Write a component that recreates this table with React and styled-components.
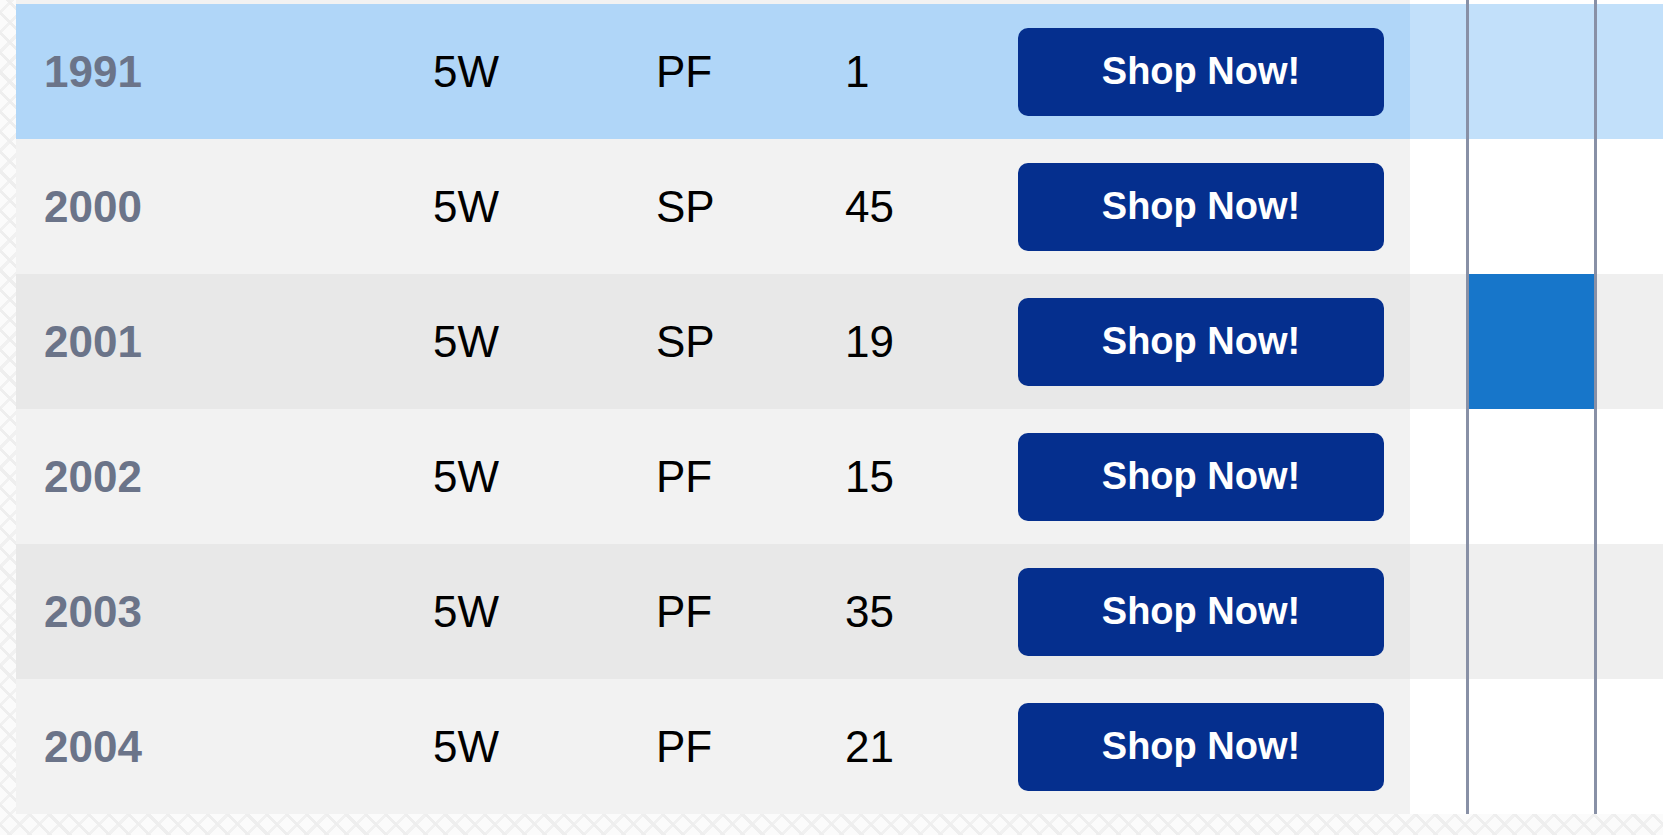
import styled, { createGlobalStyle } from "styled-components"

const GlobalStyle=createGlobalStyle`
  html,body{
    margin:0;
    padding:0;
  }
  body{
    width:1663px;
    height:835px;
    overflow:hidden;
    font-family:"Liberation Sans",Arial,sans-serif;
    background-color:#fbfbfb;
    background-image:
      repeating-linear-gradient(45deg,transparent 0 6px,#eeeeee 6px 9px,transparent 9px 14px),
      repeating-linear-gradient(-45deg,transparent 0 6px,#f1f1f1 6px 9px,transparent 9px 14px);
  }
`
const Page=styled.main`
  display:flex;
  flex-direction:column;
  padding:0 0 21px 16px;
`
const Row=styled.div`
  display:flex;
  height:${p=>p.$h||135}px;
`
const DataCells=styled.div`
  display:grid;
  grid-template-columns:389px 223px 189px 173px 366px;
  align-items:center;
  width:1394px;
  box-sizing:border-box;
  padding:0 26px 0 28px;
  background-color:${p=>p.$bg};
`
const Year=styled.span`
  font-size:44px;
  font-weight:700;
  color:#6b7489;
`
const Cell=styled.span`
  font-size:44px;
  color:#000;
`
const ShopButton=styled.button`
  height:88px;
  width:366px;
  border:none;
  border-radius:10px;
  background-color:#052f8e;
  color:#fff;
  font-family:"Liberation Sans",Arial,sans-serif;
  font-size:38px;
  font-weight:700;
  cursor:pointer;
`
const Track=styled.div`
  flex:1;
  display:grid;
  grid-template-columns:56px 131px 1fr;
  background-color:${p=>p.$bg};
`
const Slot=styled.div`
  box-sizing:border-box;
  border-left:3px solid #8890a6;
  border-right:3px solid #8890a6;
  background-color:${p=>p.$active?"#1776ca":"transparent"};
`

const rows=[
  {year:"1991",type:"5W",grade:"PF",count:"1",sel:true},
  {year:"2000",type:"5W",grade:"SP",count:"45"},
  {year:"2001",type:"5W",grade:"SP",count:"19",active:true},
  {year:"2002",type:"5W",grade:"PF",count:"15"},
  {year:"2003",type:"5W",grade:"PF",count:"35"},
  {year:"2004",type:"5W",grade:"PF",count:"21"},
]

const colors=(el,i)=>{
  if(el.sel) return ["#b0d6f8","#c2e0fa"]
  return i%2===1?["#f2f2f2","#ffffff"]:["#e8e8e8","#efefef"]
}

const App = () => {
  return (
    <>
      <GlobalStyle/>
      <Page>
        <Row $h={4}>
          <DataCells $bg="#f2f2f2"/>
          <Track $bg="#ffffff"><div/><Slot/><div/></Track>
        </Row>
        {rows.map((el,i)=>{
          const [bg,trackBg]=colors(el,i)
          return(
            <Row key={el.year}>
              <DataCells $bg={bg}>
                <Year>{el.year}</Year>
                <Cell>{el.type}</Cell>
                <Cell>{el.grade}</Cell>
                <Cell>{el.count}</Cell>
                <ShopButton>Shop Now!</ShopButton>
              </DataCells>
              <Track $bg={trackBg}>
                <div/>
                <Slot $active={el.active}/>
                <div/>
              </Track>
            </Row>
          )
        })}
      </Page>
    </>
  )
}

export default App
